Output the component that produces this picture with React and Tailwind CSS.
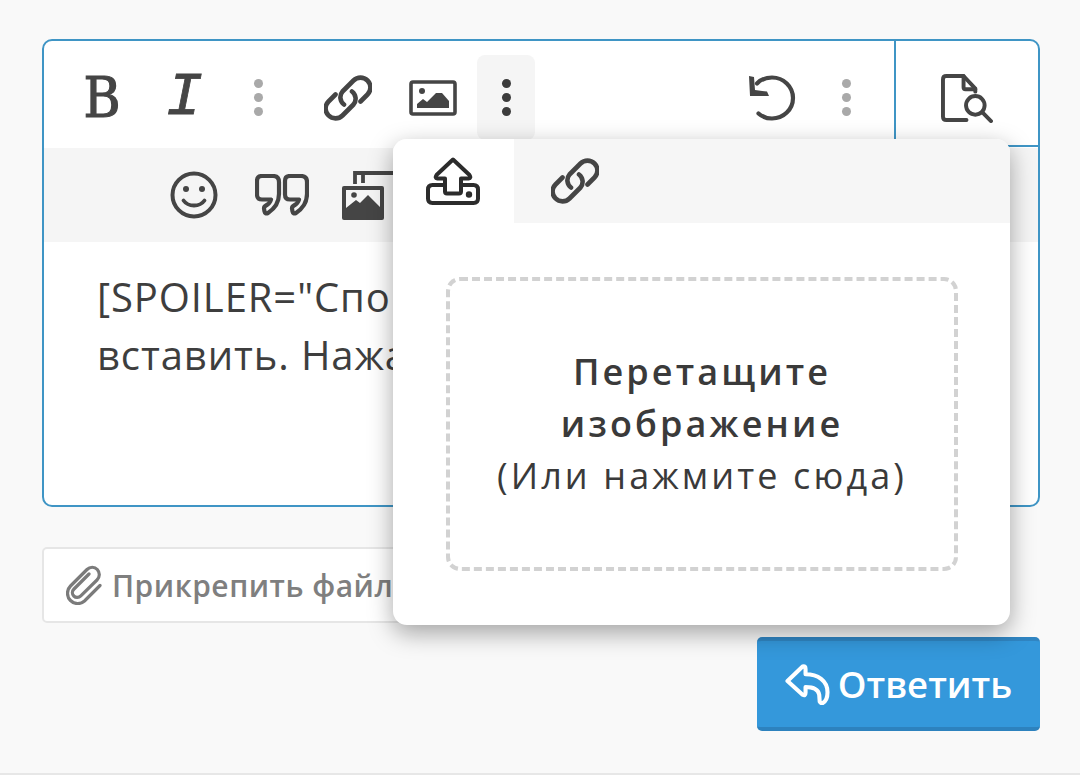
import React from "react";

const Dots = ({ c = "bg-[#a9a9a9]" }) => (
  <div className="flex flex-col gap-[5px]">
    <span className={`w-[9px] h-[9px] rounded-full ${c}`} />
    <span className={`w-[9px] h-[9px] rounded-full ${c}`} />
    <span className={`w-[9px] h-[9px] rounded-full ${c}`} />
  </div>
);

const LinkIcon = ({ className = "" }) => (
  <svg viewBox="0 0 48 48" className={className} fill="none" stroke="currentColor" strokeWidth="4.6" strokeLinecap="round" strokeLinejoin="round">
    <path d="M36.500 27.500L43.500 20.500a9.800 9.800 0 0 0-14-14L18.500 17.500a9 9 0 0 0 1.500 13" />
    <path d="M11.500 20.500L4.500 27.500a9.800 9.800 0 0 0 14 14L29.500 30.500a9 9 0 0 0-1.500-13" />
  </svg>
);

const ImageIcon = () => (
  <svg viewBox="0 0 48 36" className="w-[48px] h-[36px] text-[#454545]" fill="none">
    <rect x="2" y="2" width="44" height="32" rx="2" stroke="currentColor" strokeWidth="3.600" />
    <circle cx="13" cy="11" r="3" fill="currentColor" />
    <path d="M8 28v-4l6-5 4 3 9-9 6 0 7 8v7z" fill="currentColor" />
  </svg>
);

const UndoIcon = () => (
  <svg viewBox="0 0 48 46" className="w-[48px] h-[46px] text-[#454545]" fill="none">
    <path d="M9 8.500C13 4.300 18 2.500 24 2.500c11.500 0 21 9 21 20.500S35.500 43.500 24 43.500c-5.300 0-9.800-1.600-13.500-5" stroke="currentColor" strokeWidth="4.200" strokeLinecap="round" />
    <path d="M1 1l1 20h19l-2-4.500-12-1.500-1-13z" fill="currentColor" />
  </svg>
);

const PreviewIcon = () => (
  <svg viewBox="0 0 54 50" className="w-[53px] h-[49px] text-[#454545]" fill="none" stroke="currentColor" strokeWidth="4" strokeLinecap="round" strokeLinejoin="round">
    <path d="M27 47H6.500Q3 47 3 43.500V5.500Q3 2 6.500 2H24l12 13v3" />
    <path d="M24 2v11.500q0 2 2 2h10" />
    <circle cx="36" cy="32" r="9.500" />
    <path d="M43 39l9 9" />
  </svg>
);

const SmileIcon = () => (
  <svg viewBox="0 0 48 48" className="w-[48px] h-[48px] text-[#454545]" fill="none">
    <circle cx="24" cy="24" r="21.500" stroke="currentColor" strokeWidth="4" />
    <circle cx="16" cy="18" r="3" fill="currentColor" />
    <circle cx="32" cy="18" r="3" fill="currentColor" />
    <path d="M13.500 29.500C16 33 20 34.500 24 34.500s8-1.500 10.500-5" stroke="currentColor" strokeWidth="3.800" strokeLinecap="round" />
  </svg>
);

const QuoteIcon = () => (
  <svg viewBox="0 0 54 42" className="w-[54px] h-[42px] text-[#454545]" fill="none" stroke="currentColor" strokeWidth="4.200" strokeLinejoin="round">
    <path d="M7 2h11q6 0 6 6v12c0 9-5 15-11 19q-3 1.500-3.500-1.500l-.5-3q0-2 2-3 4-2 5-6H7q-5 0-5-5V7q0-5 5-5z" />
    <path d="M35 2h11q6 0 6 6v12c0 9-5 15-11 19q-3 1.500-3.500-1.500l-.5-3q0-2 2-3 4-2 5-6H35q-5 0-5-5V7q0-5 5-5z" />
  </svg>
);

const GalleryIcon = () => (
  <svg viewBox="0 0 60 50" className="w-[60px] h-[50px] text-[#454545]" fill="none">
    <path d="M14 14V3h46" stroke="currentColor" strokeWidth="3.800" />
    <path d="M22 3v10" stroke="currentColor" strokeWidth="3.800" />
    <path d="M3 16h38q2 0 2 2v30q0 2-2 2H3q-2 0-2-2V18q0-2 2-2z" fill="currentColor" />
    <rect x="5" y="20" width="34" height="19" fill="#f5f5f5" />
    <circle cx="13" cy="25" r="2.800" fill="currentColor" />
    <path d="M5 38l10-8 4 3 8-8 12 12v9H5z" fill="currentColor" />
  </svg>
);

const UploadIcon = () => (
  <svg viewBox="0 0 54 48" className="w-[54px] h-[48px] text-[#2c2c2c]" fill="none" stroke="currentColor" strokeWidth="4" strokeLinejoin="round" strokeLinecap="round">
    <path d="M27 2.500L10.500 18q-2 3 1 3.500H19v13q0 2 2 2h12q2 0 2-2v-13h7.500q3-.5 1-3.500z" />
    <path d="M19 28H6.500Q2 28 2 32.500v9Q2 46 6.500 46h41q4.500 0 4.500-4.500v-9Q52 28 47.500 28H35" />
    <circle cx="43" cy="37.500" r="1.200" fill="currentColor" />
  </svg>
);

const ClipIcon = () => (
  <svg viewBox="0 0 38 40" className="w-[38px] h-[40px] text-[#7b7b7b]" fill="none" stroke="currentColor" strokeWidth="3.200" strokeLinecap="round">
    <path d="M23 9L8 24c-2 2-2.200 5-.2 7s5 1.800 7-.2L31 15c3-3 3-7.500.3-10.500S24 1.500 21 4.500L4.500 21c-4 4-4 10.500 0 14.500s10 4 14 .5L34 20.500" />
  </svg>
);

const ReplyIcon = () => (
  <svg viewBox="0 0 46 42" className="w-[45px] h-[41px] text-white" fill="none" stroke="currentColor" strokeWidth="4.200" strokeLinejoin="round">
    <path d="M18 2.500L2.500 17.500 18 31.500q3 1.500 3-2v-6c8 0 13 2 14 8l.5 7q1 2 3 1.500c4-2 5-6 5-11 0-12-10-18.500-22.500-18.500V5q0-3.500-3-2.500z" />
  </svg>
);

export default function App() {
  return (
    <div
      className="relative w-[1080px] h-[775px] overflow-hidden bg-[#f9f9f9] pl-[42px] pr-[40px] pt-[39px] border-b-2 border-[#e7e7e7]"
      style={{ fontFamily: '"Open Sans", "Noto Sans", sans-serif' }}
    >
      <div className="h-[468px] rounded-[10px] border-2 border-[#3f95c5] bg-white overflow-hidden">
        <div className="flex h-[107px]">
          <div className="flex flex-1 items-start">
            <div className="ml-[29px] mt-[14px] w-[58px] h-[85px] flex items-center justify-center text-[56px] leading-none text-[#454545] [-webkit-text-stroke:1.2px_#454545]" style={{ fontFamily: '"DejaVu Serif Condensed", "DejaVu Serif", serif' }}>B</div>
            <div className="ml-[24px] mt-[14px] w-[58px] h-[85px] flex items-center justify-center text-[62px] italic leading-none text-[#454545] [-webkit-text-stroke:0.8px_#454545]" style={{ fontFamily: '"Liberation Mono", monospace' }}>I</div>
            <div className="ml-[16px] mt-[14px] w-[58px] h-[85px] flex items-center justify-center"><Dots /></div>
            <div className="ml-[32px] mt-[14px] w-[58px] h-[85px] flex items-center justify-center"><LinkIcon className="w-[48px] h-[48px] text-[#454545]" /></div>
            <div className="ml-[27px] mt-[14px] w-[58px] h-[85px] flex items-center justify-center"><ImageIcon /></div>
            <div className="ml-[15px] mt-[14px] w-[58px] h-[85px] rounded-[8px] bg-[#f5f5f5] flex items-center justify-center"><Dots c="bg-[#3c3c3c]" /></div>
            <div className="ml-[208px] mt-[14px] w-[58px] h-[85px] flex items-center justify-center"><UndoIcon /></div>
            <div className="ml-[16px] mt-[14px] w-[58px] h-[85px] flex items-center justify-center"><Dots /></div>
          </div>
          <div className="w-[144px] h-[106px] border-l-2 border-b-2 border-[#3f95c5] flex items-center justify-center pr-[2px] pt-[10px]">
            <PreviewIcon />
          </div>
        </div>
        <div className="flex items-center h-[94px] bg-[#f5f5f5] pl-[126px] gap-[37px]">
          <SmileIcon />
          <QuoteIcon />
          <div className="-ml-[5px]"><GalleryIcon /></div>
        </div>
        <div className="pl-[53px] pt-[26px] pr-[40px] text-[40px] leading-[58px] tracking-[0.9px] text-[#3e3e3e] whitespace-nowrap">
          [SPOILER="Спойлер"]Текст, который нужно<br />вставить. Нажать сюда[/SPOILER]
        </div>
      </div>

      <div className="mt-[40px] flex items-center w-[420px] h-[76px] rounded-[5px] border-2 border-[#e6e6e6] bg-white pl-[22px] gap-[8px] text-[30px] font-semibold tracking-[0.5px] text-[#7f7f7f]">
        <ClipIcon />
        <span>Прикрепить файлы</span>
      </div>

      <div className="flex justify-end mt-[14px]">
        <div className="flex items-center justify-center gap-[8px] w-[283px] h-[94px] rounded-[5px] bg-[#3498db] border-t-4 border-t-[#3085c2] border-b-4 border-b-[#2d82be] text-[36.500px] font-semibold text-white">
          <ReplyIcon />
          <span>Ответить</span>
        </div>
      </div>

      <div className="absolute left-[393px] top-[139px] w-[617px] h-[486px] rounded-[14px] bg-white shadow-[0_8px_24px_rgba(0,0,0,0.35)] overflow-hidden">
        <div className="flex h-[84px] bg-[#f6f6f6]">
          <div className="w-[121px] bg-white flex items-center justify-center pr-[2px] pb-[1px]"><UploadIcon /></div>
          <div className="w-[121px] flex items-center justify-center pb-[1px]"><LinkIcon className="w-[48px] h-[48px] text-[#454545]" /></div>
        </div>
        <div className="mt-[54px] ml-[53px] w-[512px] h-[294px] rounded-[14px] border-4 border-dashed border-[#d2d2d2] flex flex-col items-center justify-center text-[36px] leading-[52px] tracking-[3.100px] text-[#3a3a3a]">
          <span className="font-semibold">Перетащите</span>
          <span className="font-semibold">изображение</span>
          <span>(Или нажмите сюда)</span>
        </div>
      </div>
    </div>
  );
}
